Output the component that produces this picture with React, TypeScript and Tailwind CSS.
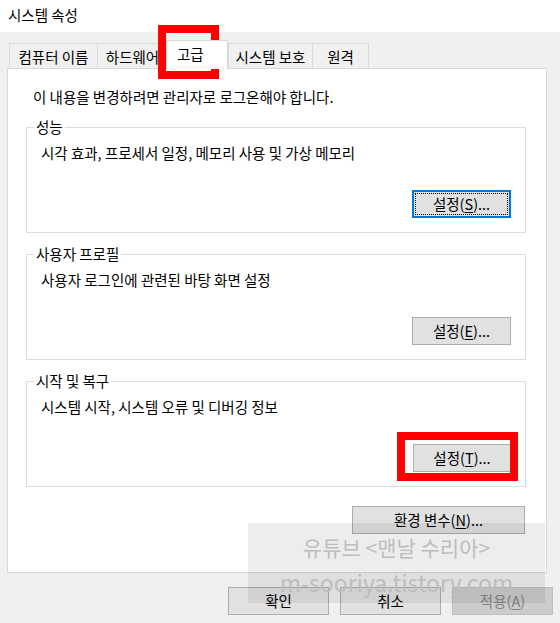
import type { ReactNode } from "react";

const tabBase = "flex h-[25px] items-center justify-center border-x border-t border-[#d9d9d9] bg-[#f0f0f0] pt-[2px]";

function Button({
  children,
  className = "",
  focused = false,
  disabled = false,
}: {
  children: ReactNode;
  className?: string;
  focused?: boolean;
  disabled?: boolean;
}) {
  const look = focused
    ? "border-2 border-[#0078d7] bg-[#e1e1e1] outline-1 outline-dotted outline-black -outline-offset-4"
    : disabled
      ? "border border-[#bfbfbf] bg-[#cccccc] text-[#838383]"
      : "border border-[#adadad] bg-[#e1e1e1]";
  return (
    <div className={`flex h-[28px] items-center justify-center leading-none ${look} ${className}`}>
      {children}
    </div>
  );
}

function Group({ title, text, children }: { title: string; text: string; children: ReactNode }) {
  return (
    <fieldset className="ml-[18px] w-[500px] border border-[#dcdcdc] px-[14px] pb-[14px]">
      <legend className="-ml-[7px] px-[2px] leading-[20px]">{title}</legend>
      <div className="mt-[6px] leading-[20px]">{text}</div>
      <div className="mt-[27px] flex justify-end">{children}</div>
    </fieldset>
  );
}

export default function App() {
  return (
    <div className="relative h-[623px] w-[560px] overflow-hidden bg-[#f0f0f0] font-['Noto_Sans_CJK_KR',sans-serif] text-[14.5px] text-black">
      {/* title bar */}
      <div className="h-[32px] bg-white pl-[8px] leading-[30px]">시스템 속성</div>

      <div className="px-[7px]">
        {/* tabs */}
        <div className="flex h-[36px] items-end pl-[2px]">
          <div className={`${tabBase} w-[89px]`}>컴퓨터 이름</div>
          <div className={`${tabBase} -ml-px w-[71px]`}>하드웨어</div>
          <div className="relative z-10 -mb-px -ml-[2px] flex h-[29px] w-[62px] items-center border-x border-t border-[#d9d9d9] bg-white pl-[10px] pb-[2px]">
            고급
          </div>
          <div className={`${tabBase} w-[85px]`}>시스템 보호</div>
          <div className={`${tabBase} -ml-px w-[57px]`}>원격</div>
        </div>

        {/* panel */}
        <div className="h-[505px] w-[540px] border border-[#d9d9d9] bg-white">
          <div className="mt-[18px] pl-[25px] leading-[20px]">
            이 내용을 변경하려면 관리자로 로그온해야 합니다.
          </div>

          <div className="mt-[10px]">
            <Group title="성능" text="시각 효과, 프로세서 일정, 메모리 사용 및 가상 메모리">
              <Button focused className="w-[99px]">
                설정(<span className="underline underline-offset-2">S</span>)...
              </Button>
            </Group>
          </div>

          <div className="mt-[11px]">
            <Group title="사용자 프로필" text="사용자 로그인에 관련된 바탕 화면 설정">
              <Button className="w-[99px]">
                설정(<span className="underline underline-offset-2">E</span>)...
              </Button>
            </Group>
          </div>

          <div className="mt-[11px]">
            <Group title="시작 및 복구" text="시스템 시작, 시스템 오류 및 디버깅 정보">
              <Button className="w-[98px]">
                설정(<span className="underline underline-offset-2">T</span>)...
              </Button>
            </Group>
          </div>

          <div className="ml-[18px] mt-[19px] flex w-[499px] justify-end">
            <Button className="w-[173px]">
              환경 변수(<span className="underline underline-offset-2">N</span>)...
            </Button>
          </div>
        </div>
      </div>

      {/* dialog buttons */}
      <div className="flex justify-end gap-[11px] pr-[7px] pt-[14px]">
        <Button className="w-[101px]">확인</Button>
        <Button className="w-[101px]">취소</Button>
        <Button disabled className="w-[101px]">
          적용(<span className="underline underline-offset-2">A</span>)
        </Button>
      </div>

      {/* red annotation boxes */}
      <div className="pointer-events-none absolute left-[158px] top-[25px] h-[54px] w-[61px] border-[8px] border-[#ff0000]" />
      <div className="pointer-events-none absolute left-[397px] top-[432px] h-[49px] w-[121px] border-[8px] border-[#ff0000]" />

      {/* watermark */}
      <div className="pointer-events-none absolute left-[248px] top-[523px] flex h-[80px] w-[297px] flex-col items-center bg-black/[0.07] pt-[10px] text-[#bdbdbd]">
        <div className="text-[21px] leading-[28px]">유튜브 &lt;맨날 수리아&gt;</div>
        <div className="mt-[6px] text-[23px] leading-[30px]">m-sooriya.tistory.com</div>
      </div>
    </div>
  );
}
